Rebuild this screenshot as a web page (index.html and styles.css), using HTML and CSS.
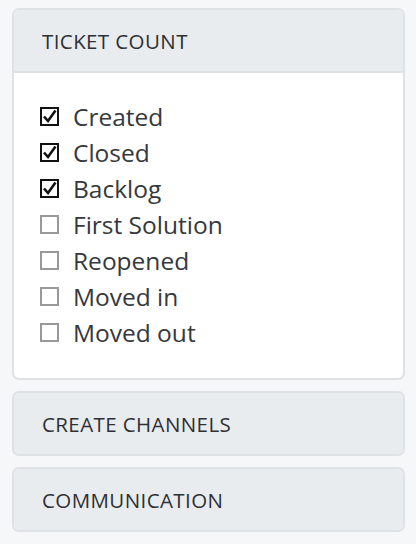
FILE: index.html
```html
<!DOCTYPE html>
<html>
<head>
<meta charset="utf-8">
<link rel="stylesheet" href="styles.css">
</head>
<body>
<div class="sidebar">
  <section class="panel">
    <div class="panel-head">TICKET COUNT</div>
    <div class="panel-body">
      <label class="opt"><span class="box checked"><svg viewBox="0 0 19 19"><path d="M4 9.5 L8 14 L15.5 3.5" /></svg></span>Created</label>
      <label class="opt"><span class="box checked"><svg viewBox="0 0 19 19"><path d="M4 9.5 L8 14 L15.5 3.5" /></svg></span>Closed</label>
      <label class="opt"><span class="box checked"><svg viewBox="0 0 19 19"><path d="M4 9.5 L8 14 L15.5 3.5" /></svg></span>Backlog</label>
      <label class="opt"><span class="box"></span>First Solution</label>
      <label class="opt"><span class="box"></span>Reopened</label>
      <label class="opt"><span class="box"></span>Moved in</label>
      <label class="opt"><span class="box"></span>Moved out</label>
    </div>
  </section>
  <section class="panel">
    <div class="panel-head solo">CREATE CHANNELS</div>
  </section>
  <section class="panel">
    <div class="panel-head solo">COMMUNICATION</div>
  </section>
</div>
</body>
</html>
```
FILE: styles.css
```css
html, body {
  margin: 0;
  padding: 0;
  background: #f6f7f8;
}
body {
  font-family: "Open Sans", "Noto Sans", sans-serif;
  color: #35383c;
}
.sidebar {
  padding: 8px 11px 0 12px;
  display: flex;
  flex-direction: column;
  gap: 11px;
}
.panel {
  border: 2px solid #dfe2e5;
  border-radius: 7px;
  background: #fff;
  overflow: hidden;
}
.panel-head {
  background: #e9ecef;
  height: 63px;
  box-sizing: border-box;
  display: flex;
  align-items: center;
  padding-left: 28px;
  font-size: 20.5px;
  letter-spacing: 0.4px;
  color: #2d3034;
  border-bottom: 2px solid #dfe2e5;
}
.panel-head.solo {
  border-bottom: none;
  height: 61px;
}
.panel-body {
  padding: 25px 0 28px 26px;
  display: flex;
  flex-direction: column;
}
.opt {
  display: flex;
  align-items: center;
  height: 36px;
  font-size: 24.5px;
}
.box {
  width: 19px;
  height: 19px;
  box-sizing: border-box;
  border: 2px solid #999;
  margin-right: 14px;
  display: flex;
  align-items: center;
  justify-content: center;
  background: #fff;
}
.box.checked {
  border-color: #111;
}
.box svg {
  width: 19px;
  height: 19px;
  flex: none;
}
.box svg path {
  fill: none;
  stroke: #111;
  stroke-width: 2.6;
}
```
